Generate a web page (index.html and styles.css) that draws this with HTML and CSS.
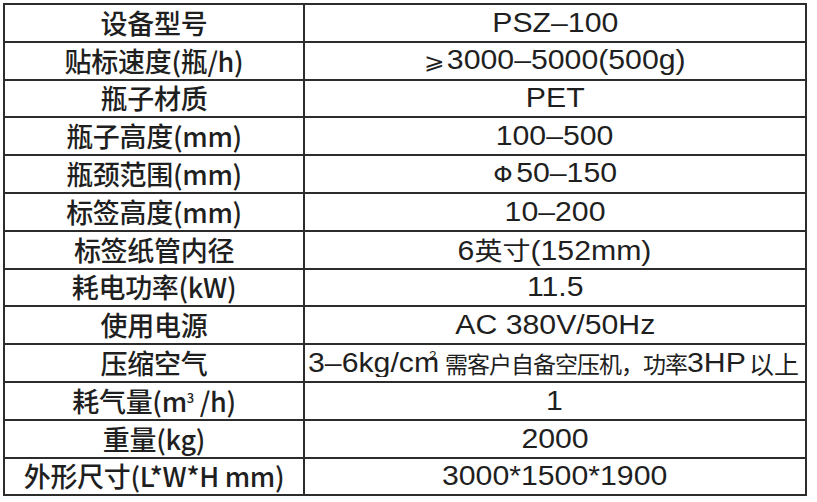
FILE: index.html
```html
<!DOCTYPE html>
<html lang="zh">
<head>
<meta charset="utf-8">
<title>设备参数</title>
<link rel="stylesheet" href="styles.css">
</head>
<body>
<table class="spec">
  <colgroup><col class="c1"><col class="c2"></colgroup>
  <tbody>
    <tr><td class="k">设备型号</td><td class="v"><span class="w">PSZ–100</span></td></tr>
    <tr><td class="k">贴标速度(瓶/h)</td><td class="v"><span class="w"><span class="ge">⩾</span>3000–5000(500g)</span></td></tr>
    <tr><td class="k">瓶子材质</td><td class="v"><span class="w">PET</span></td></tr>
    <tr><td class="k">瓶子高度(mm)</td><td class="v"><span class="w">100–500</span></td></tr>
    <tr><td class="k">瓶颈范围(mm)</td><td class="v"><span class="w"><span class="phi">Φ</span>50–150</span></td></tr>
    <tr><td class="k">标签高度(mm)</td><td class="v"><span class="w">10–200</span></td></tr>
    <tr><td class="k">标签纸管内径</td><td class="v"><span class="w">6<span class="cj">英寸</span>(152mm)</span></td></tr>
    <tr><td class="k">耗电功率(kW)</td><td class="v"><span class="w">11.5</span></td></tr>
    <tr><td class="k">使用电源</td><td class="v"><span class="w">AC 380V/50Hz</span></td></tr>
    <tr><td class="k">压缩空气</td><td class="v left"><div class="clip"><span class="w wl">3–6kg/cm<sup class="sq">2</sup></span><span class="cjr">需客户自备空压机，功率</span><span class="w wl2">3HP</span><span class="cjr big">以上</span></div></td></tr>
    <tr><td class="k">耗气量(m<sup class="cube">3</sup> /h)</td><td class="v"><span class="w">1</span></td></tr>
    <tr><td class="k">重量(kg)</td><td class="v"><span class="w">2000</span></td></tr>
    <tr><td class="k">外形尺寸(L*W*H mm)</td><td class="v"><span class="w">3000*1500*1900</span></td></tr>
  </tbody>
</table>
</body>
</html>
```
FILE: styles.css
```css
html, body {
  margin: 0;
  padding: 0;
  background: #ffffff;
}
body {
  padding: 3px 0 0 3px;
}
.spec {
  border-collapse: collapse;
  table-layout: fixed;
  width: 802px;
  border: 2px solid #2c2c2c;
  color: #1f1f1f;
}
.c1 { width: 300px; }
.c2 { width: 502px; }
.spec td {
  border: 2px solid #2c2c2c;
  height: 35.8px;
  padding: 0;
  text-align: center;
  vertical-align: middle;
  white-space: nowrap;
  line-height: 28px;
  overflow: hidden;
}
.k {
  font-family: "Noto Sans CJK SC", "Noto Sans", sans-serif;
  font-weight: 500;
  font-size: 27px;
  letter-spacing: -0.3px;
}
.cube {
  font-size: 13px;
  vertical-align: 9px;
  line-height: 0;
}
.v {
  font-family: "Liberation Sans", Arial, sans-serif;
  font-size: 27px;
}
.w {
  display: inline-block;
  transform: scaleX(1.12);
}
.ge {
  font-family: "DejaVu Sans", "Noto Sans CJK SC", sans-serif;
  font-size: 22px;
  margin-right: 2px;
}
.phi {
  font-family: "DejaVu Sans", sans-serif;
  font-size: 22px;
  margin-right: 3px;
}
.cj {
  font-family: "Noto Sans CJK SC", sans-serif;
  font-size: 25px;
}
.v.left {
  text-align: left;
}
.clip {
  display: flex;
  align-items: center;
  width: 500px;
  overflow: hidden;
  white-space: nowrap;
  padding-left: 3px;
  box-sizing: border-box;
}
.wl {
  transform-origin: left center;
  flex: 0 0 137px;
}
.sq {
  font-size: 12px;
  vertical-align: 12px;
  line-height: 0;
  margin-left: -9px;
}
.wl2 {
  transform-origin: left center;
  flex: 0 0 62px;
}
.cjr {
  flex: 0 0 auto;
  font-family: "Noto Sans CJK SC", sans-serif;
  font-size: 23px;
  letter-spacing: -1px;
}
.cjr.big {
  font-size: 25px;
  letter-spacing: 0;
}
```
